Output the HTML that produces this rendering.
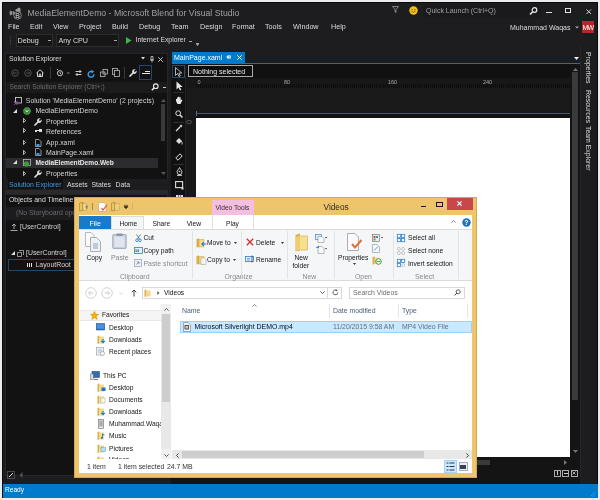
<!DOCTYPE html>
<html><head><meta charset="utf-8">
<style>
*{margin:0;padding:0;box-sizing:border-box}
html,body{width:600px;height:500px;overflow:hidden;background:#ececef}
body{position:relative;font-family:"Liberation Sans",sans-serif;font-size:7px;color:#d0d0d0}
.a{position:absolute}
.t{position:absolute;white-space:nowrap;line-height:1}
svg{position:absolute;overflow:visible}
.m{font-size:7.2px;color:#dcdcdc;top:22.8px}
.st{color:#d4d4d4;font-size:6.9px}
.ex{color:#141414;font-size:6.65px}
</style></head><body><div id="root" style="position:absolute;left:0;top:0;width:600px;height:500px;will-change:transform">
<!-- VS window -->
<div class="a" style="left:2px;top:2px;width:596px;height:496px;background:#1d1d1f;border:1px solid #0a0a0a"></div>

<!-- title bar -->
<svg style="left:8.5px;top:7px" width="14" height="13" viewBox="0 0 14 13"><path d="M1 3.5 Q0 6 1 8.5 L3.5 7.5 L3.5 4.5 Z" fill="#8c8c8c"/><path d="M4 4 L7 6 L4 8Z" fill="#8c8c8c"/><path d="M6 3 L10 0.5 L11.5 1.5 L11.5 5 L8 5 Z" fill="#9a9a9a"/><circle cx="8.6" cy="8.4" r="3.8" fill="#1d1d1f" stroke="#8c8c8c" stroke-width="0.9"/><text x="8.6" y="11" font-size="6.5" font-family="Liberation Sans" font-weight="bold" text-anchor="middle" fill="#a8a8a8">B</text></svg>
<div class="t" style="left:27.5px;top:9.3px;font-size:8.7px;color:#a0a0a0">MediaElementDemo - Microsoft Blend for Visual Studio</div>
<svg style="left:391.5px;top:6px" width="7" height="7" viewBox="0 0 7 7"><path d="M0.5 0.5 L6.5 0.5 L4 3.5 L4 6.5 L3 6 L3 3.5 Z" fill="none" stroke="#9a9a9a" stroke-width="0.8"/></svg>
<svg style="left:408.5px;top:5.7px" width="9" height="9" viewBox="0 0 9 9"><circle cx="4.5" cy="4.5" r="4.2" fill="#f4c21d"/><circle cx="3.1" cy="3.6" r="0.6" fill="#5a4500"/><circle cx="5.9" cy="3.6" r="0.6" fill="#5a4500"/><path d="M2.4 5.2 Q4.5 7.5 6.6 5.2" fill="none" stroke="#5a4500" stroke-width="0.7"/></svg>
<div class="a" style="left:423px;top:4px;width:118px;height:14px;background:#1a1a1c"></div>
<div class="t" style="left:426px;top:6.8px;font-size:7px;color:#a0a0a0">Quick Launch (Ctrl+Q)</div>
<svg style="left:529px;top:7px" width="9" height="8" viewBox="0 0 9 8"><circle cx="5.5" cy="3" r="2.3" fill="none" stroke="#e8e8e8" stroke-width="1.2"/><path d="M4 4.5 L1 7.5" stroke="#e8e8e8" stroke-width="1.6"/></svg>
<div class="a" style="left:546px;top:11.8px;width:6px;height:1.3px;background:#e0e0e0"></div>
<div class="a" style="left:565.3px;top:8.3px;width:6.2px;height:5px;border:1px solid #e0e0e0;border-top-width:1.8px"></div>
<svg style="left:585.8px;top:8.8px" width="5.5" height="5.5" viewBox="0 0 6 6"><path d="M0.5 0.5 L5.5 5.5 M5.5 0.5 L0.5 5.5" stroke="#e0e0e0" stroke-width="1"/></svg>

<!-- menu -->
<div class="t m" style="left:8px">File</div>
<div class="t m" style="left:30px">Edit</div>
<div class="t m" style="left:53px">View</div>
<div class="t m" style="left:79px">Project</div>
<div class="t m" style="left:112px">Build</div>
<div class="t m" style="left:139px">Debug</div>
<div class="t m" style="left:171px">Team</div>
<div class="t m" style="left:200px">Design</div>
<div class="t m" style="left:232px">Format</div>
<div class="t m" style="left:265px">Tools</div>
<div class="t m" style="left:293px">Window</div>
<div class="t m" style="left:331px">Help</div>
<div class="t" style="left:510px;top:23.5px;font-size:7px;color:#dcdcdc">Muhammad Waqas</div>
<svg style="left:575px;top:26px" width="4" height="3" viewBox="0 0 4 3"><path d="M0 0.5 L4 0.5 L2 2.5Z" fill="#aaa"/></svg>
<div class="a" style="left:582px;top:21px;width:12px;height:12px;background:#b5262b"></div>
<div class="t" style="left:582.5px;top:23.5px;font-size:7px;color:#fff;letter-spacing:-0.8px">MW</div>

<!-- toolbar -->
<div class="a" style="left:10px;top:36px;width:2px;height:9px;border-left:1px dotted #444"></div>
<div class="a" style="left:15.5px;top:34px;width:37px;height:12.5px;background:#161617;border:1px solid #2c2c2e"></div>
<div class="t" style="left:17.5px;top:36.5px;font-size:7.2px;color:#dcdcdc">Debug</div>
<div class="a" style="left:48px;top:40px;width:2.5px;height:1px;background:#aaa"></div>
<div class="a" style="left:56px;top:34px;width:63px;height:12.5px;background:#161617;border:1px solid #2c2c2e"></div>
<div class="t" style="left:58.5px;top:36.5px;font-size:7.2px;color:#dcdcdc">Any CPU</div>
<div class="a" style="left:114px;top:40px;width:2.5px;height:1px;background:#aaa"></div>
<svg style="left:126px;top:36.5px" width="6" height="7" viewBox="0 0 6 7"><path d="M0 0 L5.5 3.5 L0 7Z" fill="#3fb24f"/></svg>
<div class="t" style="left:135.5px;top:36.5px;font-size:6.8px;color:#dcdcdc">Internet Explorer</div>
<div class="a" style="left:189px;top:40.5px;width:3px;height:1px;background:#aaa"></div>
<div class="a" style="left:196px;top:43px;width:3px;height:1px;background:#aaa"></div>
<svg style="left:196px;top:44px" width="3" height="2" viewBox="0 0 3 2"><path d="M0 0 L3 0 L1.5 2Z" fill="#aaa"/></svg>

<!-- Solution Explorer panel -->
<div class="a" style="left:5px;top:52.5px;width:163px;height:139px;background:#121213;border:1px solid #262628"></div>
<div class="t" style="left:9px;top:55.5px;font-size:6.9px;color:#dedede">Solution Explorer</div>
<svg style="left:141px;top:57px" width="4" height="3" viewBox="0 0 4 3"><path d="M0 0 L4 0 L2 2.5Z" fill="#ddd"/></svg>
<svg style="left:149.5px;top:55.5px" width="4" height="7" viewBox="0 0 4 7"><path d="M1 0.5 L3 0.5 L3 4 L1 4 Z M0 4 L4 4 M2 4 L2 6.5" fill="none" stroke="#ccc" stroke-width="0.8"/></svg>
<svg style="left:158px;top:56.5px" width="5" height="5" viewBox="0 0 5 5"><path d="M0.3 0.3 L4.7 4.7 M4.7 0.3 L0.3 4.7" stroke="#ddd" stroke-width="0.9"/></svg>
<!-- se toolbar -->
<svg style="left:11px;top:69px" width="8" height="8" viewBox="0 0 8 8"><circle cx="4" cy="4" r="3.3" fill="none" stroke="#555" stroke-width="0.9"/><path d="M5.8 4 L2.3 4 M3.8 2.5 L2.3 4 L3.8 5.5" fill="none" stroke="#555" stroke-width="0.8"/></svg>
<svg style="left:23.5px;top:69px" width="8" height="8" viewBox="0 0 8 8"><circle cx="4" cy="4" r="3.3" fill="none" stroke="#555" stroke-width="0.9"/><path d="M2.2 4 L5.7 4 M4.2 2.5 L5.7 4 L4.2 5.5" fill="none" stroke="#555" stroke-width="0.8"/></svg>
<svg style="left:36px;top:68.5px" width="8" height="8" viewBox="0 0 8 8"><path d="M0.5 4 L4 0.8 L7.5 4 M1.5 3.3 L1.5 7.5 L6.5 7.5 L6.5 3.3 M3.3 7.5 L3.3 5.2 L4.7 5.2 L4.7 7.5" fill="none" stroke="#e6e6e6" stroke-width="0.9"/></svg>
<div class="a" style="left:49.5px;top:67px;width:1px;height:12px;background:#3a3a3a"></div>
<svg style="left:54.5px;top:67.5px" width="16" height="9" viewBox="0 0 16 9"><circle cx="5" cy="5.2" r="2.6" fill="none" stroke="#ddd" stroke-width="0.9"/><path d="M5 3.8 L5 5.3 L6 5.8 M2 1 L3 2.2" fill="none" stroke="#ddd" stroke-width="0.8"/><path d="M12 4.6 L14.5 4.6 L14.5 5.4 L12 5.4Z" fill="#aaa"/></svg>
<svg style="left:74.5px;top:68.5px" width="7" height="8" viewBox="0 0 7 8"><path d="M0.5 2.5 L6 2.5 M4.5 1 L6 2.5 L4.5 4 M6.5 5.5 L1 5.5 M2.5 4 L1 5.5 L2.5 7" fill="none" stroke="#ddd" stroke-width="0.9"/></svg>
<svg style="left:86.5px;top:69.5px" width="8.5" height="8.5" viewBox="0 0 8 8"><path d="M6.5 4 A2.7 2.7 0 1 1 5 1.6" fill="none" stroke="#3d9be9" stroke-width="1.4"/><path d="M3.8 0 L6.8 1.2 L4.5 3.5Z" fill="#3d9be9"/></svg>
<svg style="left:99.5px;top:68.5px" width="8" height="8" viewBox="0 0 8 8"><rect x="0.5" y="3" width="4.5" height="4.5" fill="none" stroke="#bbb" stroke-width="0.8"/><rect x="3" y="0.5" width="4.5" height="4.5" fill="none" stroke="#bbb" stroke-width="0.8"/></svg>
<svg style="left:111.5px;top:68px" width="8" height="9" viewBox="0 0 8 9"><rect x="0.5" y="0.5" width="5" height="6" fill="none" stroke="#bbb" stroke-width="0.8"/><rect x="2.5" y="2.5" width="5" height="6" fill="#121213" stroke="#bbb" stroke-width="0.8"/></svg>
<div class="a" style="left:124px;top:67px;width:1px;height:12px;background:#3a3a3a"></div>
<svg style="left:129px;top:69px" width="8" height="8" viewBox="0 0 8 8"><path d="M1 7 L4.5 3.5" stroke="#e0e0e0" stroke-width="1.7" stroke-linecap="round"/><circle cx="5.4" cy="2.6" r="2.3" fill="#e0e0e0"/><path d="M5.4 2.6 L8 0" stroke="#121213" stroke-width="1.5"/></svg>
<div class="a" style="left:138.6px;top:64.8px;width:13.6px;height:15.6px;border:1px solid #27476a;background:#121213"></div>
<div class="a" style="left:141.6px;top:72.6px;width:8px;height:1.4px;background:#e6e6e6"></div>
<div class="a" style="left:144.5px;top:71px;width:5px;height:1px;background:#e6e6e6"></div>
<!-- search -->
<div class="a" style="left:6px;top:81.5px;width:161px;height:11px;background:#1b1b1c"></div>
<div class="t" style="left:9.5px;top:84px;font-size:6.6px;color:#6e6e6e">Search Solution Explorer (Ctrl+;)</div>
<svg style="left:151px;top:83px" width="8" height="8" viewBox="0 0 8 8"><circle cx="4.8" cy="3.2" r="2.3" fill="none" stroke="#e8e8e8" stroke-width="1.1"/><path d="M3.3 4.7 L0.8 7.2" stroke="#e8e8e8" stroke-width="1.5"/></svg>
<div class="a" style="left:162.5px;top:87px;width:3px;height:1px;background:#ccc"></div>

<!-- tree -->
<svg style="left:14px;top:96.5px" width="8" height="8" viewBox="0 0 8 8"><rect x="1.5" y="0.5" width="6" height="5.5" fill="none" stroke="#ddd" stroke-width="0.8"/><path d="M0 4.5 L3.5 7.5 M0 7.5 L3.5 4.5" stroke="#9b4fc9" stroke-width="1.1"/></svg>
<div class="t st" style="left:25.8px;top:98.3px">Solution 'MediaElementDemo' (2 projects)</div>
<svg style="left:13px;top:108.5px" width="4" height="4" viewBox="0 0 4 4"><path d="M4 0 L4 4 L0 4Z" fill="#e0e0e0"/></svg>
<svg style="left:22.5px;top:106.5px" width="8" height="8" viewBox="0 0 8 8"><circle cx="4" cy="4" r="3.5" fill="#3d8a3d" stroke="#8fd18f" stroke-width="0.6" stroke-dasharray="1 0.7"/><path d="M2.5 3 L4 5 L5.5 3" fill="none" stroke="#cfe" stroke-width="0.8"/></svg>
<div class="t st" style="left:35.5px;top:108.3px">MediaElementDemo</div>
<svg style="left:23px;top:118px" width="3" height="5" viewBox="0 0 3 5"><path d="M0.5 0.4 L2.7 2.5 L0.5 4.6Z" fill="none" stroke="#e0e0e0" stroke-width="0.8"/></svg>
<svg style="left:34px;top:117.5px" width="8" height="8" viewBox="0 0 8 8"><path d="M1 7 L4.5 3.5" stroke="#e0e0e0" stroke-width="1.7" stroke-linecap="round"/><circle cx="5.4" cy="2.6" r="2.3" fill="#e0e0e0"/><path d="M5.4 2.6 L8 0" stroke="#121213" stroke-width="1.5"/></svg>
<div class="t st" style="left:46px;top:118.8px">Properties</div>
<svg style="left:23px;top:128px" width="3" height="5" viewBox="0 0 3 5"><path d="M0.5 0.4 L2.7 2.5 L0.5 4.6Z" fill="none" stroke="#e0e0e0" stroke-width="0.8"/></svg>
<div class="a" style="left:34.5px;top:129.5px;width:2px;height:2px;background:#ddd"></div>
<div class="a" style="left:37px;top:130.3px;width:2px;height:0.8px;background:#ddd"></div>
<div class="a" style="left:39px;top:129px;width:3px;height:3px;background:#ddd"></div>
<div class="t st" style="left:46px;top:128.6px">References</div>
<svg style="left:23px;top:140px" width="3" height="5" viewBox="0 0 3 5"><path d="M0.5 0.4 L2.7 2.5 L0.5 4.6Z" fill="none" stroke="#e0e0e0" stroke-width="0.8"/></svg>
<svg style="left:35px;top:138.5px" width="7" height="8" viewBox="0 0 7 8"><path d="M0.5 0.5 L4 0.5 L6 2.5 L6 7.5 L0.5 7.5Z" fill="none" stroke="#ccc" stroke-width="0.7"/><rect x="1.5" y="5" width="3" height="2.5" fill="#3d9be9"/></svg>
<div class="t st" style="left:46px;top:140.1px">App.xaml</div>
<svg style="left:23px;top:149.5px" width="3" height="5" viewBox="0 0 3 5"><path d="M0.5 0.4 L2.7 2.5 L0.5 4.6Z" fill="none" stroke="#e0e0e0" stroke-width="0.8"/></svg>
<svg style="left:35px;top:148px" width="7" height="8" viewBox="0 0 7 8"><path d="M0.5 0.5 L4 0.5 L6 2.5 L6 7.5 L0.5 7.5Z" fill="none" stroke="#ccc" stroke-width="0.7"/><rect x="1.5" y="5" width="3" height="2.5" fill="#3d9be9"/></svg>
<div class="t st" style="left:46px;top:149.8px">MainPage.xaml</div>
<div class="a" style="left:6px;top:158px;width:151.5px;height:9.5px;background:#2c2c2e"></div>
<svg style="left:13px;top:160px" width="4" height="4" viewBox="0 0 4 4"><path d="M4 0 L4 4 L0 4Z" fill="#e0e0e0"/></svg>
<svg style="left:23px;top:158.5px" width="8" height="8" viewBox="0 0 8 8"><rect x="0.5" y="0.5" width="7" height="6" fill="none" stroke="#ccc" stroke-width="0.7"/><circle cx="3.5" cy="5" r="2.7" fill="#3d9a3d"/></svg>
<div class="t st" style="left:35.5px;top:160px;font-weight:bold;font-size:6.6px;color:#e8e8e8">MediaElementDemo.Web</div>
<svg style="left:23px;top:170.5px" width="3" height="5" viewBox="0 0 3 5"><path d="M0.5 0.4 L2.7 2.5 L0.5 4.6Z" fill="none" stroke="#e0e0e0" stroke-width="0.8"/></svg>
<svg style="left:34px;top:169.5px" width="8" height="8" viewBox="0 0 8 8"><path d="M1 7 L4.5 3.5" stroke="#e0e0e0" stroke-width="1.7" stroke-linecap="round"/><circle cx="5.4" cy="2.6" r="2.3" fill="#e0e0e0"/><path d="M5.4 2.6 L8 0" stroke="#121213" stroke-width="1.5"/></svg>
<div class="t st" style="left:46px;top:171.1px">Properties</div>
<!-- se scrollbar -->
<div class="a" style="left:159.5px;top:95px;width:7px;height:82px;background:#121213"></div>
<svg style="left:160.5px;top:98.5px" width="5" height="3" viewBox="0 0 5 3"><path d="M0 3 L2.5 0 L5 3Z" fill="#555"/></svg>
<div class="a" style="left:161px;top:104px;width:4px;height:37px;background:#3a3a3c"></div>
<svg style="left:160.5px;top:171.5px" width="5" height="3" viewBox="0 0 5 3"><path d="M0 0 L2.5 3 L5 0Z" fill="#555"/></svg>
<!-- se tabs -->
<div class="a" style="left:5px;top:178.5px;width:163px;height:11.5px;background:#1d1d1f"></div>
<div class="a" style="left:7.5px;top:179px;width:55px;height:10px;background:#121213"></div>
<div class="t" style="left:9px;top:182.3px;font-size:6.9px;color:#3d9be9">Solution Explorer</div>
<div class="t" style="left:67px;top:182.3px;font-size:6.9px;color:#dcdcdc">Assets</div>
<div class="t" style="left:91.5px;top:182.3px;font-size:6.9px;color:#dcdcdc">States</div>
<div class="t" style="left:115.5px;top:182.3px;font-size:6.9px;color:#dcdcdc">Data</div>

<div class="a" style="left:5px;top:190px;width:163px;height:3.8px;background:#2a2a2d"></div>
<!-- Objects and Timeline -->
<div class="a" style="left:5px;top:194px;width:163px;height:282px;background:#121213;border:1px solid #262628"></div>
<div class="t" style="left:9px;top:196.5px;font-size:6.9px;color:#dedede">Objects and Timeline</div>
<div class="a" style="left:6px;top:207px;width:161px;height:13px;background:#1c1c1e"></div>
<div class="t" style="left:16px;top:210px;font-size:6.9px;color:#6a6a6a">(No Storyboard open)</div>
<svg style="left:9.5px;top:222.8px" width="8" height="8" viewBox="0 0 8 8"><path d="M4 6 L4 1 M2 3 L4 1 L6 3 M0.5 7.5 L7.5 7.5" fill="none" stroke="#ccc" stroke-width="0.8"/></svg>
<div class="t st" style="left:20px;top:223.8px">[UserControl]</div>
<svg style="left:10.5px;top:251px" width="4" height="4" viewBox="0 0 4 4"><path d="M4 0 L4 4 L0 4Z" fill="#e0e0e0"/></svg>
<svg style="left:17px;top:249.5px" width="7" height="7" viewBox="0 0 7 7"><path d="M2 0.5 L6.5 0.5 L6.5 5 M0.5 2.5 L4.5 2.5 L4.5 6.5 L0.5 6.5Z" fill="none" stroke="#ccc" stroke-width="0.7"/></svg>
<div class="t st" style="left:26px;top:250.3px">[UserControl]</div>
<div class="a" style="left:8px;top:259px;width:160px;height:11.5px;border:1px solid #24476b;background:#121213"></div>
<div class="a" style="left:26.5px;top:262.5px;width:1px;height:4.5px;background:#ddd;box-shadow:2px 0 #ddd,4px 0 #ddd"></div>
<div class="t st" style="left:35.5px;top:262px">LayoutRoot</div>

<!-- left bottom icons -->
<svg style="left:7px;top:471px" width="8" height="8" viewBox="0 0 8 8"><rect x="0.5" y="0.5" width="7" height="7" fill="none" stroke="#aaa" stroke-width="0.7" stroke-dasharray="1 1"/><path d="M2 6 L6 2" stroke="#ddd" stroke-width="1"/></svg>
<svg style="left:18.5px;top:472px" width="4" height="6" viewBox="0 0 4 6"><path d="M3.5 0 L0.5 3 L3.5 6Z" fill="#555"/></svg>

<!-- Designer tab -->
<div class="a" style="left:171.5px;top:51.5px;width:73.5px;height:11.5px;background:#007acc"></div>
<div class="t" style="left:174px;top:54px;font-size:7px;color:#fff">MainPage.xaml</div>
<svg style="left:226px;top:55px" width="5" height="4" viewBox="0 0 5 4"><path d="M0.3 2 L4.7 2 M1.5 0.5 L1.5 3.5" stroke="#fff" stroke-width="0.8"/><rect x="2.3" y="0.8" width="2.2" height="2.4" fill="none" stroke="#fff" stroke-width="0.7"/></svg>
<svg style="left:236.5px;top:54.5px" width="5" height="5" viewBox="0 0 5 5"><path d="M0.3 0.3 L4.7 4.7 M4.7 0.3 L0.3 4.7" stroke="#fff" stroke-width="1"/></svg>
<div class="a" style="left:171.5px;top:62.5px;width:408.5px;height:1.2px;background:#007acc"></div>
<svg style="left:574px;top:56.5px" width="5" height="3" viewBox="0 0 5 3"><path d="M0 0 L5 0 L2.5 3Z" fill="#eee"/></svg>
<!-- designer background -->
<div class="a" style="left:171px;top:64px;width:409px;height:420px;background:#141415"></div>
<!-- toolbox -->
<div class="a" style="left:171px;top:64px;width:15px;height:413px;background:#111112;border-right:1px solid #232325"></div>
<div class="a" style="left:172px;top:65px;width:13px;height:12.5px;border:1px solid #244a70"></div>
<svg style="left:175px;top:66.5px" width="8" height="10" viewBox="0 0 8 10"><path d="M0.5 0.5 L0.5 8.5 L2.5 6.5 L4 9.5 L5.3 8.8 L3.8 6 L6.8 6Z" fill="none" stroke="#ddd" stroke-width="0.8"/></svg>
<svg style="left:175.5px;top:80.5px" width="8" height="10" viewBox="0 0 8 10"><path d="M0.5 0.5 L0.5 8.5 L2.5 6.5 L4 9.5 L5.3 8.8 L3.8 6 L6.8 6Z" fill="#e6e6e6"/></svg>
<div class="a" style="left:173px;top:92px;width:11px;height:0.8px;background:#2e2e30"></div>
<svg style="left:174.5px;top:95.5px" width="9" height="9" viewBox="0 0 9 9"><path d="M1 5 L1 3 L2 3 L2 4.5 L2 1.5 L3 1.5 L3 4 L3 0.8 L4.3 0.8 L4.3 4 L4.5 1.3 L5.7 1.3 L5.7 4.5 L6.5 3.5 L7.5 4 L5.5 8 L2.5 8 Z" fill="#e6e6e6"/></svg>
<svg style="left:175px;top:109.5px" width="8" height="8" viewBox="0 0 8 8"><circle cx="3.2" cy="3.2" r="2.4" fill="none" stroke="#ddd" stroke-width="1"/><path d="M5 5 L7.5 7.5" stroke="#ddd" stroke-width="1.5"/></svg>
<div class="a" style="left:173px;top:121.5px;width:11px;height:0.8px;background:#2e2e30"></div>
<svg style="left:175px;top:123.5px" width="8" height="8" viewBox="0 0 8 8"><path d="M1 7 L5 3" stroke="#ddd" stroke-width="1.2"/><path d="M4.5 2 L6 0.5 L7.5 2 L6 3.5Z" fill="#ddd"/></svg>
<svg style="left:175px;top:137px" width="8" height="8" viewBox="0 0 8 8"><path d="M1 4 L4 1 L7 4 L4 7Z" fill="#ddd"/><path d="M6 4 Q8 6 7 7.5" stroke="#ddd" stroke-width="0.9" fill="none"/></svg>
<svg style="left:175px;top:152.5px" width="8" height="8" viewBox="0 0 8 8"><path d="M0.8 5 L5 0.8 L7.2 3 L3 7.2Z" fill="none" stroke="#ddd" stroke-width="1"/></svg>
<div class="a" style="left:173px;top:163.5px;width:11px;height:0.8px;background:#2e2e30"></div>
<svg style="left:176px;top:166.5px" width="7" height="9" viewBox="0 0 7 9"><path d="M3.5 0.5 L6 4.5 L5 7.5 L2 7.5 L1 4.5Z" fill="none" stroke="#ddd" stroke-width="0.9"/><circle cx="3.5" cy="4.5" r="0.8" fill="#ddd"/><path d="M1 8.5 L6 8.5" stroke="#ddd" stroke-width="0.8"/></svg>
<svg style="left:175px;top:181px" width="9" height="9" viewBox="0 0 9 9"><rect x="0.6" y="0.6" width="7" height="6" fill="none" stroke="#ddd" stroke-width="1.1"/><rect x="6.5" y="6.5" width="2" height="2" fill="#ddd"/></svg>
<div class="a" style="left:176px;top:195px;width:1.5px;height:1.5px;background:#ddd;box-shadow:2.5px 0 #ddd,5px 0 #ddd"></div>
<!-- ruler -->
<div class="a" style="left:187px;top:64px;width:383px;height:14px;background:#111112"></div><div class="a" style="left:187px;top:78px;width:383px;height:10px;background:#171718"></div><div class="a" style="left:187px;top:88px;width:383px;height:25.5px;background:#1a1a1b"></div><div class="a" style="left:187px;top:114px;width:383px;height:4px;background:#121213"></div>
<div class="a" style="left:196px;top:84px;width:374px;height:4px;background:repeating-linear-gradient(90deg,#0e0e0f 0 1px,transparent 1px 2.05px)"></div>
<div class="t" style="left:197.5px;top:79.5px;font-size:5.5px;color:#aaa">0</div>
<div class="t" style="left:284px;top:79.5px;font-size:5.5px;color:#aaa">80</div>
<div class="t" style="left:388px;top:79.5px;font-size:5.5px;color:#aaa">160</div>
<div class="t" style="left:483px;top:79.5px;font-size:5.5px;color:#aaa">240</div>
<div class="a" style="left:195.5px;top:113px;width:374px;height:1px;background:#4a5670"></div>
<div class="a" style="left:195.5px;top:111px;width:1px;height:5px;background:#4a6aa0"></div>
<div class="a" style="left:186px;top:114px;width:10px;height:363px;background:#18181a"></div>
<svg style="left:186px;top:120px" width="6" height="4" viewBox="0 0 6 4"><ellipse cx="3" cy="2" rx="2.5" ry="1.6" fill="none" stroke="#666" stroke-width="0.7"/></svg>
<!-- nothing selected -->
<div class="a" style="left:187.5px;top:65px;width:65.5px;height:12px;border:1px solid #aaa;background:#0e0e0f"></div>
<div class="t" style="left:193px;top:67.5px;font-size:7px;color:#e8e8e8">Nothing selected</div>
<!-- artboard -->
<div class="a" style="left:196px;top:118px;width:373.5px;height:338.5px;background:#ffffff"></div>
<!-- designer scrollbars -->
<div class="a" style="left:570px;top:64px;width:10px;height:413px;background:#141415"></div>
<svg style="left:572.5px;top:67.5px" width="5" height="3" viewBox="0 0 5 3"><path d="M0 3 L2.5 0 L5 3Z" fill="#777"/></svg>
<div class="a" style="left:572px;top:72px;width:5.5px;height:328px;background:#3a3a3c"></div>
<svg style="left:572.5px;top:449.5px" width="5" height="3" viewBox="0 0 5 3"><path d="M0 0 L2.5 3 L5 0Z" fill="#777"/></svg>
<div class="a" style="left:196px;top:458px;width:374px;height:8px;background:#141415"></div>
<div class="a" style="left:470px;top:459.5px;width:20px;height:5px;background:#3a3a3c"></div>
<svg style="left:563.5px;top:459.5px" width="3" height="5" viewBox="0 0 3 5"><path d="M0 0 L3 2.5 L0 5Z" fill="#777"/></svg>
<!-- bottom icons -->
<div class="a" style="left:553.5px;top:469.5px;width:7px;height:7px;border:1px solid #aaa"></div>
<div class="a" style="left:556.5px;top:471px;width:1px;height:4px;background:#ccc"></div>
<div class="a" style="left:562px;top:469.5px;width:7px;height:7px;border:1px solid #aaa"></div>
<div class="a" style="left:563.5px;top:472.5px;width:4px;height:1px;background:#ccc"></div>
<div class="a" style="left:570.5px;top:469.5px;width:7px;height:7px;border:1px solid #aaa"></div>
<svg style="left:572px;top:471px" width="4" height="4" viewBox="0 0 4 4"><path d="M0.5 0.5 L3.5 3.5 M3.5 0.5 L0.5 3.5" stroke="#ccc" stroke-width="0.8"/></svg>

<!-- right vertical tabs -->
<div class="a" style="left:580px;top:46px;width:1px;height:431px;background:#262628"></div>
<div class="t" style="left:590.7px;top:51.5px;font-size:6.9px;color:#dcdcdc;transform-origin:0 0;transform:rotate(90deg)">Properties</div>
<div class="t" style="left:590.7px;top:89.8px;font-size:6.9px;color:#dcdcdc;transform-origin:0 0;transform:rotate(90deg)">Resources</div>
<div class="t" style="left:590.7px;top:126.4px;font-size:6.9px;color:#dcdcdc;transform-origin:0 0;transform:rotate(90deg)">Team Explorer</div>

<!-- status bar -->
<div class="a" style="left:3px;top:483.5px;width:595px;height:14px;background:#007acc"></div>
<div class="t" style="left:5px;top:487.3px;font-size:6.6px;color:#fff">Ready</div>
<svg style="left:590px;top:491px" width="6" height="6" viewBox="0 0 6 6"><path d="M5.5 0.5 L0.5 5.5 M5.5 3 L3 5.5" stroke="#3d9be9" stroke-width="0.8"/></svg>

<!-- EXPLORER -->
<div class="a" style="left:74px;top:197px;width:403px;height:280.5px;background:#efc56b;border:1px solid #d2aa55"></div>
<!-- title bar icons -->
<svg style="left:79px;top:202px" width="9" height="9" viewBox="0 0 9 9"><path d="M0.5 1 L4 0.3 L4 8.5 L0.5 8.8Z" fill="#d8ad48" stroke="#a07a20" stroke-width="0.5"/><path d="M4 1.5 L7.5 1.5 L7.5 8.2 L4 8.2Z" fill="#f6dc8c" stroke="#b89038" stroke-width="0.5"/><path d="M2 1.5 L2 8" stroke="#fbe9a8" stroke-width="0.8"/><path d="M6.5 3.5 L8.8 3.5 L8.8 6.5 L6.5 6.5Z" fill="#8a8a8a"/></svg>
<div class="a" style="left:92px;top:203px;width:0.8px;height:7px;background:#b08a3a"></div>
<svg style="left:98px;top:202px" width="10" height="10" viewBox="0 0 10 10"><path d="M0.5 0.5 L6 0.5 L8 2.5 L8 9.5 L0.5 9.5Z" fill="#fbfbfb" stroke="#c0a060" stroke-width="0.6"/><path d="M3.5 6 L5 8 L9 3" fill="none" stroke="#e0503a" stroke-width="1.2"/></svg>
<svg style="left:111px;top:202px" width="9" height="9" viewBox="0 0 9 9"><path d="M0.5 1 L4 0.3 L4 8.5 L0.5 8.8Z" fill="#d8ad48" stroke="#a07a20" stroke-width="0.5"/><path d="M4 1.5 L8 1.5 L8 8.2 L4 8.2Z" fill="#f6dc8c" stroke="#b89038" stroke-width="0.5"/><path d="M2 1.5 L2 8" stroke="#fbe9a8" stroke-width="0.8"/><path d="M6 1.5 L6 8" stroke="#e0bb60" stroke-width="0.6"/></svg>
<svg style="left:124px;top:205px" width="4" height="4" viewBox="0 0 4 4"><path d="M0 0.3 L4 0.3 M0 1.5 L4 1.5 L2 3.8Z" stroke="#222" stroke-width="0.6" fill="#222"/></svg>
<div class="a" style="left:131.5px;top:203px;width:0.8px;height:7px;background:#d9b45a"></div>
<div class="t" style="left:323.5px;top:202.5px;font-size:8.3px;color:#2a2a2a">Videos</div>
<div class="a" style="left:421px;top:205.5px;width:5px;height:1.6px;background:#1a1a1a"></div>
<div class="a" style="left:436px;top:202px;width:6.5px;height:4.8px;border:1px solid #1a1a1a;border-top-width:1.8px"></div>
<div class="a" style="left:447px;top:197.5px;width:25.5px;height:12px;background:#c7474a"></div>
<svg style="left:457px;top:201px" width="5" height="5" viewBox="0 0 5 5"><path d="M0.4 0.4 L4.6 4.6 M4.6 0.4 L0.4 4.6" stroke="#fff" stroke-width="1.1"/></svg>
<!-- contextual tab header -->
<div class="a" style="left:211.5px;top:200px;width:42px;height:15px;background:#f4bee0"></div>
<div class="t" style="left:215.5px;top:204.5px;font-size:6.6px;color:#333">Video Tools</div>
<!-- client -->
<div class="a" style="left:79px;top:215px;width:392.5px;height:257.5px;background:#ffffff"></div>
<!-- tabs -->
<div class="a" style="left:79px;top:215.5px;width:32px;height:13.5px;background:#1979ca"></div>
<div class="t" style="left:89.5px;top:219.5px;font-size:7px;color:#fff">File</div>
<div class="a" style="left:111px;top:215.5px;width:33px;height:14px;background:#f5f6f7;border:1px solid #dadbdc;border-bottom:none"></div>
<div class="t ex" style="left:119.5px;top:220.6px">Home</div>
<div class="t ex" style="left:152.5px;top:220.6px">Share</div>
<div class="t ex" style="left:186.7px;top:220.6px">View</div>
<div class="a" style="left:211.5px;top:215px;width:0.8px;height:14px;background:#e0e0e0"></div>
<div class="a" style="left:253px;top:215px;width:0.8px;height:14px;background:#e0e0e0"></div>
<div class="t ex" style="left:226px;top:220.6px">Play</div>
<svg style="left:451px;top:219.8px" width="5" height="3" viewBox="0 0 5 3"><path d="M0.4 2.6 L2.5 0.5 L4.6 2.6" fill="none" stroke="#777" stroke-width="0.9"/></svg>
<svg style="left:461.5px;top:217.5px" width="9" height="9" viewBox="0 0 9 9"><circle cx="4.5" cy="4.5" r="4.2" fill="#1c6fc2"/><text x="4.5" y="7.3" font-size="7" font-weight="bold" text-anchor="middle" font-family="Liberation Sans" fill="#fff">?</text></svg>
<!-- ribbon body -->
<div class="a" style="left:79px;top:229px;width:392.5px;height:52px;background:#f5f6f7;border-top:1px solid #dadbdc;border-bottom:1px solid #dadbdc"></div>
<!-- clipboard -->
<svg style="left:85px;top:232px" width="17" height="20" viewBox="0 0 17 20"><path d="M0.5 0.5 L6 0.5 L9 3.5 L9 14.5 L0.5 14.5Z" fill="#fafafa" stroke="#9aa0a8" stroke-width="0.7"/><path d="M5.5 5.5 L11.5 5.5 L15.5 9.5 L15.5 19.5 L5.5 19.5Z" fill="#eef2f6" stroke="#8a9098" stroke-width="0.7"/><rect x="8" y="11" width="5" height="6" fill="#b9cbdb"/></svg>
<div class="t ex" style="left:86.5px;top:255px">Copy</div>
<svg style="left:111.5px;top:232.5px" width="15" height="16" viewBox="0 0 15 16"><rect x="0.7" y="1.5" width="13.5" height="14" rx="1" fill="#c7cdd8" stroke="#8e98aa" stroke-width="0.7"/><rect x="2.3" y="3.5" width="10.3" height="10.5" fill="#dfe5ee"/><rect x="4.5" y="0.5" width="6" height="2.5" fill="#8e98aa"/></svg>
<div class="t" style="left:111px;top:255px;font-size:6.9px;color:#888">Paste</div>
<svg style="left:134.5px;top:234px" width="7" height="8" viewBox="0 0 7 8"><path d="M1.5 0.5 L4.5 5 M5.5 0.5 L2.5 5" stroke="#55606c" stroke-width="0.8"/><circle cx="2" cy="6.3" r="1.3" fill="none" stroke="#2a86d6" stroke-width="0.9"/><circle cx="5" cy="6.3" r="1.3" fill="none" stroke="#2a86d6" stroke-width="0.9"/></svg>
<div class="t ex" style="left:143.5px;top:235px">Cut</div>
<svg style="left:133.5px;top:247px" width="9" height="7" viewBox="0 0 9 7"><rect x="0.5" y="0.5" width="8" height="6" fill="#e7eff8" stroke="#3a7cc6" stroke-width="0.8"/><path d="M2 2 L2 5 L3.2 3.5 L4.4 5 L4.4 2" fill="none" stroke="#2a5ea0" stroke-width="0.7"/></svg>
<div class="t ex" style="left:143.5px;top:248px">Copy path</div>
<svg style="left:134px;top:259px" width="8" height="8" viewBox="0 0 8 8"><rect x="0.5" y="0.5" width="7" height="7" fill="#eef0f4" stroke="#98a0b0" stroke-width="0.7"/><path d="M2.5 5.5 L5 3 M3 3 L5 3 L5 5" fill="none" stroke="#4a7cc0" stroke-width="0.7"/></svg>
<div class="t" style="left:143.5px;top:260.5px;font-size:6.9px;color:#8a8a8a">Paste shortcut</div>
<div class="t" style="left:120px;top:273.5px;font-size:6.9px;color:#8a8a8a">Clipboard</div>
<div class="a" style="left:191.5px;top:231px;width:0.8px;height:48px;background:#e2e3e4"></div>
<!-- organize -->
<svg style="left:195.5px;top:237.5px" width="11" height="10" viewBox="0 0 11 10"><path d="M0.5 1 L3 0.5 L3 9 L0.5 9.5Z" fill="#d8b048"/><path d="M3 1.5 L8 1.5 L8 9 L3 9Z" fill="#f6d98a" stroke="#c9a24a" stroke-width="0.5"/><path d="M10.5 6 L6 6 M7.8 4.2 L6 6 L7.8 7.8" fill="none" stroke="#2a7ac8" stroke-width="1.2"/></svg>
<div class="t ex" style="left:207px;top:240px">Move to</div>
<svg style="left:234px;top:241.5px" width="3" height="2" viewBox="0 0 3 2"><path d="M0 0 L3 0 L1.5 2Z" fill="#333"/></svg>
<svg style="left:195.5px;top:254.5px" width="11" height="10" viewBox="0 0 11 10"><path d="M0.5 1 L3 0.5 L3 9 L0.5 9.5Z" fill="#d8b048"/><path d="M3 1.5 L8 1.5 L8 9 L3 9Z" fill="#f6d98a" stroke="#c9a24a" stroke-width="0.5"/><path d="M5 3 L8.5 3 L10 4.5 L10 9.5 L5 9.5Z" fill="#f4f4f4" stroke="#999" stroke-width="0.5"/></svg>
<div class="t ex" style="left:207px;top:257px">Copy to</div>
<svg style="left:233px;top:258.5px" width="3" height="2" viewBox="0 0 3 2"><path d="M0 0 L3 0 L1.5 2Z" fill="#333"/></svg>
<div class="t" style="left:224.5px;top:273.5px;font-size:6.9px;color:#8a8a8a">Organize</div>
<div class="a" style="left:241px;top:231px;width:0.8px;height:48px;background:#e2e3e4"></div>
<svg style="left:245.5px;top:238px" width="8" height="8" viewBox="0 0 8 8"><path d="M0.8 0.8 L7.2 7.2 M7.2 0.8 L0.8 7.2" stroke="#d0302a" stroke-width="1.3"/></svg>
<div class="t ex" style="left:256px;top:239.8px">Delete</div>
<svg style="left:281px;top:241.5px" width="3" height="2" viewBox="0 0 3 2"><path d="M0 0 L3 0 L1.5 2Z" fill="#333"/></svg>
<svg style="left:245px;top:255px" width="10" height="8" viewBox="0 0 10 8"><rect x="0.5" y="1.5" width="8" height="5" fill="#e2eef9" stroke="#3a7cc6" stroke-width="0.8"/><path d="M2 3.5 L5 3.5 M2 5 L5 5" stroke="#3a7cc6" stroke-width="0.6"/><path d="M7 0.5 L7 7.5" stroke="#333" stroke-width="0.7"/></svg>
<div class="t ex" style="left:256px;top:256.6px">Rename</div>
<div class="a" style="left:286.5px;top:231px;width:0.8px;height:48px;background:#e2e3e4"></div>
<!-- new -->
<svg style="left:294.5px;top:232.5px" width="13" height="19" viewBox="0 0 13 19"><path d="M0.5 2 L5 0.5 L5 17.5 L0.5 18.5Z" fill="#d9b24a"/><path d="M4 3 L12.5 3 L12.5 17 L4 17Z" fill="#f7df92" stroke="#caa650" stroke-width="0.6"/><path d="M1 4 L5 2.5 L5 17 L1 18Z" fill="#f0cd6c"/></svg>
<div class="t ex" style="left:294.5px;top:254.8px">New</div>
<div class="t ex" style="left:292.5px;top:262.8px">folder</div>
<svg style="left:314.5px;top:233.5px" width="12" height="9" viewBox="0 0 12 9"><rect x="0.5" y="0.5" width="6" height="5" fill="#dfeaf5" stroke="#4a86c8" stroke-width="0.7"/><path d="M3 2.5 L7 2.5 L9 4.5 L9 8.5 L3 8.5Z" fill="#fafafa" stroke="#8090a0" stroke-width="0.6"/><path d="M10 3 L12 3 L11 4.5Z" fill="#333"/></svg>
<svg style="left:314.5px;top:245px" width="12" height="9" viewBox="0 0 12 9"><path d="M3 1.5 L7 1.5 L9 3.5 L9 8.5 L3 8.5Z" fill="#fafafa" stroke="#8090a0" stroke-width="0.6"/><path d="M0.5 3 L4 0.5 L4 3Z" fill="#3a86d0"/><path d="M10 3 L12 3 L11 4.5Z" fill="#333"/></svg>
<div class="t" style="left:302.5px;top:273.5px;font-size:6.9px;color:#8a8a8a">New</div>
<div class="a" style="left:334px;top:231px;width:0.8px;height:48px;background:#e2e3e4"></div>
<!-- open -->
<svg style="left:346.5px;top:233px" width="16" height="18" viewBox="0 0 16 18"><path d="M0.5 0.5 L8 0.5 L11.5 4 L11.5 17.5 L0.5 17.5Z" fill="#fbfbfb" stroke="#8a8f96" stroke-width="0.7"/><path d="M5 11 L8 14.5 L14.5 7" fill="none" stroke="#e0703a" stroke-width="2"/></svg>
<div class="t ex" style="left:338px;top:255px">Properties</div>
<svg style="left:352.5px;top:263px" width="3" height="2" viewBox="0 0 3 2"><path d="M0 0 L3 0 L1.5 2Z" fill="#333"/></svg>
<svg style="left:371.5px;top:233.5px" width="11" height="8" viewBox="0 0 11 8"><rect x="0.5" y="0.5" width="7" height="7" fill="#eee" stroke="#666" stroke-width="0.6"/><rect x="1.5" y="2" width="2" height="2" fill="#c44"/><rect x="4" y="2" width="2" height="2" fill="#48c"/><rect x="1.5" y="4.5" width="2" height="2" fill="#4a4"/><path d="M9 3 L11 3 L10 4.5Z" fill="#333"/></svg>
<svg style="left:372px;top:244px" width="8" height="9" viewBox="0 0 8 9"><path d="M0.5 0.5 L5 0.5 L7.5 3 L7.5 8.5 L0.5 8.5Z" fill="#fafafa" stroke="#8090a0" stroke-width="0.6"/><path d="M2 6.5 L6 2.5" stroke="#4a86d0" stroke-width="0.9"/></svg>
<svg style="left:371.5px;top:255.5px" width="10" height="9" viewBox="0 0 10 9"><path d="M0.5 1 L3 0.5 L3 8 L0.5 8.5Z" fill="#d9b24a"/><path d="M2.5 1.5 L7 1.5 L7 8 L2.5 8Z" fill="#f6d98a"/><circle cx="6.5" cy="5.5" r="2.8" fill="#fff" stroke="#3a9a3a" stroke-width="1"/><path d="M4.5 5.5 L8.5 5.5" stroke="#3a9a3a" stroke-width="0.9"/></svg>
<div class="t" style="left:355px;top:273.5px;font-size:6.9px;color:#8a8a8a">Open</div>
<div class="a" style="left:392.5px;top:231px;width:0.8px;height:48px;background:#e2e3e4"></div>
<!-- select -->
<svg style="left:396.5px;top:233.5px" width="8" height="8" viewBox="0 0 8 8"><rect x="0.3" y="0.3" width="3.2" height="3.2" fill="none" stroke="#2f86d6" stroke-width="0.8"/><rect x="4.5" y="0.3" width="3.2" height="3.2" fill="none" stroke="#2f86d6" stroke-width="0.8"/><rect x="0.3" y="4.5" width="3.2" height="3.2" fill="none" stroke="#2f86d6" stroke-width="0.8"/><rect x="4.5" y="4.5" width="3.2" height="3.2" fill="none" stroke="#2f86d6" stroke-width="0.8"/></svg>
<div class="t ex" style="left:408px;top:234.5px">Select all</div>
<svg style="left:396.5px;top:246.5px" width="8" height="8" viewBox="0 0 8 8"><circle cx="1.9" cy="1.9" r="1.5" fill="none" stroke="#aaa" stroke-width="0.6"/><circle cx="6.1" cy="1.9" r="1.5" fill="none" stroke="#aaa" stroke-width="0.6"/><circle cx="1.9" cy="6.1" r="1.5" fill="none" stroke="#aaa" stroke-width="0.6"/><circle cx="6.1" cy="6.1" r="1.5" fill="none" stroke="#aaa" stroke-width="0.6"/></svg>
<div class="t ex" style="left:408px;top:248.3px">Select none</div>
<svg style="left:396.5px;top:259px" width="8" height="8" viewBox="0 0 8 8"><rect x="0.3" y="0.3" width="3.2" height="3.2" fill="none" stroke="#2f86d6" stroke-width="0.8"/><rect x="4.5" y="0.3" width="3.2" height="3.2" fill="none" stroke="#2f86d6" stroke-width="0.8"/><rect x="0.3" y="4.5" width="3.2" height="3.2" fill="none" stroke="#2f86d6" stroke-width="0.8"/><circle cx="6.1" cy="6.1" r="1.5" fill="none" stroke="#aaa" stroke-width="0.6"/></svg>
<div class="t ex" style="left:408px;top:261px">Invert selection</div>
<div class="t" style="left:415px;top:273.5px;font-size:6.9px;color:#8a8a8a">Select</div>
<div class="a" style="left:458px;top:231px;width:0.8px;height:48px;background:#e2e3e4"></div>

<!-- address row -->
<svg style="left:84.5px;top:286.5px" width="12" height="12" viewBox="0 0 12 12"><circle cx="6" cy="6" r="5.3" fill="none" stroke="#c8c8c8" stroke-width="0.8"/><path d="M8.5 6 L3.5 6 M5.5 4 L3.5 6 L5.5 8" fill="none" stroke="#c0c0c0" stroke-width="0.8"/></svg>
<svg style="left:100.5px;top:286.5px" width="12" height="12" viewBox="0 0 12 12"><circle cx="6" cy="6" r="5.3" fill="none" stroke="#c8c8c8" stroke-width="0.8"/><path d="M3.5 6 L8.5 6 M6.5 4 L8.5 6 L6.5 8" fill="none" stroke="#c0c0c0" stroke-width="0.8"/></svg>
<svg style="left:118.5px;top:291.5px" width="4" height="3" viewBox="0 0 4 3"><path d="M0.3 0.5 L2 2.5 L3.7 0.5" fill="none" stroke="#c8c8c8" stroke-width="0.6"/></svg>
<svg style="left:130.5px;top:288.5px" width="6" height="8" viewBox="0 0 6 8"><path d="M3 7.5 L3 1 M0.7 3.3 L3 1 L5.3 3.3" fill="none" stroke="#333" stroke-width="0.9"/></svg>
<div class="a" style="left:141.5px;top:286.5px;width:186.5px;height:12px;border:1px solid #d9d9d9;background:#fff"></div>
<svg style="left:144px;top:288.5px" width="7" height="8" viewBox="0 0 7 8"><path d="M0.5 1 L2.5 0.5 L2.5 7.5 L0.5 8Z" fill="#d9b24a"/><path d="M2.5 1.5 L6.5 1.5 L6.5 7.5 L2.5 7.5Z" fill="#f6d98a"/></svg>
<svg style="left:156.5px;top:290.5px" width="3" height="4" viewBox="0 0 3 4"><path d="M0.3 0 L2.5 2 L0.3 4Z" fill="#555"/></svg>
<div class="t ex" style="left:164px;top:290.3px">Videos</div>
<svg style="left:320px;top:291px" width="5" height="3" viewBox="0 0 5 3"><path d="M0.4 0.4 L2.5 2.5 L4.6 0.4" fill="none" stroke="#333" stroke-width="0.8"/></svg>
<div class="a" style="left:328px;top:286.5px;width:14px;height:12px;border:1px solid #d9d9d9;border-left:none;background:#fff"></div>
<svg style="left:331.5px;top:289px" width="7" height="7" viewBox="0 0 7 7"><path d="M5.8 3.5 A2.4 2.4 0 1 1 4.5 1.3" fill="none" stroke="#444" stroke-width="0.8"/><path d="M3.6 0.2 L5.6 1.2 L4 2.6Z" fill="#444"/></svg>
<div class="a" style="left:348.5px;top:286.5px;width:116px;height:12px;border:1px solid #d9d9d9;background:#fff"></div>
<div class="t" style="left:353px;top:290.3px;font-size:6.9px;color:#6d6d6d">Search Videos</div>
<svg style="left:453.5px;top:288.5px" width="7" height="7" viewBox="0 0 7 7"><circle cx="4.2" cy="2.8" r="2" fill="none" stroke="#333" stroke-width="0.8"/><path d="M2.8 4.2 L0.6 6.4" stroke="#333" stroke-width="1"/></svg>

<!-- nav pane -->
<div class="a" style="left:80px;top:309.5px;width:81px;height:11px;background:#f5f5f5;border-top:1px solid #e8e8e8;border-bottom:1px solid #e8e8e8"></div>
<svg style="left:89.5px;top:311px" width="9" height="9" viewBox="0 0 9 9"><path d="M4.5 0.3 L5.8 3.1 L8.7 3.3 L6.4 5.2 L7.2 8.5 L4.5 6.7 L1.8 8.5 L2.6 5.2 L0.3 3.3 L3.2 3.1Z" fill="#f4b400" stroke="#d08000" stroke-width="0.4"/></svg>
<div class="t ex" style="left:102px;top:312px">Favorites</div>
<svg style="left:96px;top:323px" width="9" height="8" viewBox="0 0 9 8"><rect x="0.3" y="0.5" width="8.4" height="6.5" fill="#2b6fc0" stroke="#1d4f90" stroke-width="0.5"/><rect x="1" y="1.2" width="7" height="4.5" fill="#4a90dd"/></svg>
<div class="t ex" style="left:109px;top:324.7px">Desktop</div>
<svg style="left:96.5px;top:334.5px" width="9" height="9" viewBox="0 0 9 9"><path d="M0.5 1 L2.5 0.5 L2.5 8.5 L0.5 9Z" fill="#d9b24a"/><path d="M2.5 1.5 L7 1.5 L7 8.5 L2.5 8.5Z" fill="#f6d98a"/><path d="M6 4 L6 7.5 M4.3 6 L6 7.8 L7.7 6" fill="none" stroke="#1e78c8" stroke-width="1.1"/></svg>
<div class="t ex" style="left:109px;top:336.7px">Downloads</div>
<svg style="left:96px;top:346.5px" width="9" height="9" viewBox="0 0 9 9"><rect x="0.5" y="0.5" width="7" height="7.5" fill="#f2f2f2" stroke="#8a9aaa" stroke-width="0.6"/><path d="M2 3 L6 3 M2 5 L5 5" stroke="#6a8aaa" stroke-width="0.6"/><circle cx="6.5" cy="6.5" r="2" fill="#fff" stroke="#777" stroke-width="0.5"/></svg>
<div class="t ex" style="left:109px;top:348.5px">Recent places</div>
<svg style="left:89.5px;top:370.5px" width="10" height="9" viewBox="0 0 10 9"><rect x="2" y="0.5" width="7.5" height="6" fill="#2b6fc0" stroke="#333" stroke-width="0.5"/><rect x="0.3" y="3" width="3" height="5.5" fill="#ddd" stroke="#666" stroke-width="0.5"/><path d="M4 8.5 L8 8.5" stroke="#555" stroke-width="0.8"/></svg>
<div class="t ex" style="left:103px;top:372.7px">This PC</div>
<svg style="left:96.5px;top:383px" width="9" height="9" viewBox="0 0 9 9"><path d="M0.5 1 L2.5 0.5 L2.5 8.5 L0.5 9Z" fill="#d9b24a"/><path d="M2.5 1.5 L7 1.5 L7 8.5 L2.5 8.5Z" fill="#f6d98a"/><rect x="4.5" y="4.5" width="4" height="3.5" fill="#2b6fc0"/></svg>
<div class="t ex" style="left:109px;top:384.5px">Desktop</div>
<svg style="left:96.5px;top:395px" width="9" height="9" viewBox="0 0 9 9"><path d="M0.5 1 L2.5 0.5 L2.5 8.5 L0.5 9Z" fill="#d9b24a"/><path d="M2.5 1.5 L7 1.5 L7 8.5 L2.5 8.5Z" fill="#f6d98a"/><rect x="4" y="3" width="4" height="5" fill="#f8f8f8" stroke="#999" stroke-width="0.4"/></svg>
<div class="t ex" style="left:109px;top:396.5px">Documents</div>
<svg style="left:96.5px;top:407px" width="9" height="9" viewBox="0 0 9 9"><path d="M0.5 1 L2.5 0.5 L2.5 8.5 L0.5 9Z" fill="#d9b24a"/><path d="M2.5 1.5 L7 1.5 L7 8.5 L2.5 8.5Z" fill="#f6d98a"/><path d="M6 4 L6 7.5 M4.3 6 L6 7.8 L7.7 6" fill="none" stroke="#1e78c8" stroke-width="1.1"/></svg>
<div class="t ex" style="left:109px;top:409.3px">Downloads</div>
<svg style="left:97.5px;top:419px" width="6" height="10" viewBox="0 0 6 10"><rect x="0.5" y="0.5" width="5" height="9" fill="#e8e8e8" stroke="#666" stroke-width="0.6"/><rect x="1.3" y="1.5" width="3.4" height="6" fill="#aaa"/></svg>
<div class="t ex" style="left:109px;top:421.3px">Muhammad.Waqas</div>
<svg style="left:96.5px;top:431px" width="9" height="9" viewBox="0 0 9 9"><path d="M0.5 1 L2.5 0.5 L2.5 8.5 L0.5 9Z" fill="#d9b24a"/><path d="M2.5 1.5 L7 1.5 L7 8.5 L2.5 8.5Z" fill="#f6d98a"/><path d="M5.5 3 L5.5 7 M5.5 3 L7.5 4" fill="none" stroke="#1e78c8" stroke-width="0.9"/><circle cx="4.8" cy="7" r="1" fill="#1e78c8"/></svg>
<div class="t ex" style="left:109px;top:433.3px">Music</div>
<svg style="left:96.5px;top:443.5px" width="9" height="9" viewBox="0 0 9 9"><path d="M0.5 1 L2.5 0.5 L2.5 8.5 L0.5 9Z" fill="#d9b24a"/><path d="M2.5 1.5 L7 1.5 L7 8.5 L2.5 8.5Z" fill="#f6d98a"/><rect x="4" y="3.5" width="4.5" height="4" fill="#bfe0f0" stroke="#4a9ad0" stroke-width="0.5"/></svg>
<div class="t ex" style="left:109px;top:445.8px">Pictures</div>
<div class="a" style="left:79px;top:455px;width:82px;height:4px;overflow:hidden"><div class="t ex" style="left:30px;top:1.5px">Videos</div><svg style="left:17.5px;top:0.5px" width="9" height="9" viewBox="0 0 9 9"><path d="M0.5 1 L2.5 0.5 L2.5 8.5 L0.5 9Z" fill="#d9b24a"/><path d="M2.5 1.5 L7 1.5 L7 8.5 L2.5 8.5Z" fill="#f6d98a"/></svg></div>
<!-- nav scrollbar -->
<div class="a" style="left:161px;top:304px;width:10px;height:155px;background:#e8e8e8"></div>
<div class="a" style="left:161px;top:304px;width:10px;height:10px;background:#f0f0f0"></div>
<svg style="left:163.5px;top:307.5px" width="5" height="3" viewBox="0 0 5 3"><path d="M0.4 2.6 L2.5 0.5 L4.6 2.6" fill="none" stroke="#444" stroke-width="0.9"/></svg>
<div class="a" style="left:162px;top:314px;width:8px;height:88px;background:#cdcdcd"></div>
<div class="a" style="left:161px;top:449px;width:10px;height:10px;background:#f0f0f0"></div>
<svg style="left:163.5px;top:453.5px" width="5" height="3" viewBox="0 0 5 3"><path d="M0.4 0.4 L2.5 2.5 L4.6 0.4" fill="none" stroke="#444" stroke-width="0.9"/></svg>

<!-- content header -->
<div class="t" style="left:182px;top:308px;font-size:6.9px;color:#4c607a">Name</div>
<svg style="left:251.5px;top:303.5px" width="5" height="3" viewBox="0 0 5 3"><path d="M0.4 2.6 L2.5 0.5 L4.6 2.6" fill="none" stroke="#777" stroke-width="0.8"/></svg>
<div class="a" style="left:328.5px;top:304px;width:0.8px;height:14px;background:#e5e5e5"></div>
<div class="t" style="left:333px;top:308px;font-size:6.9px;color:#4c607a">Date modified</div>
<div class="a" style="left:397.5px;top:304px;width:0.8px;height:14px;background:#e5e5e5"></div>
<div class="t" style="left:402px;top:308px;font-size:6.9px;color:#4c607a">Type</div>
<div class="a" style="left:467px;top:304px;width:0.8px;height:14px;background:#e5e5e5"></div>
<!-- file row -->
<div class="a" style="left:180px;top:320.5px;width:291.5px;height:12.5px;background:#cce8ff;border:1px solid #99d1ff"></div>
<svg style="left:183px;top:322px" width="8" height="10" viewBox="0 0 8 10"><path d="M0.5 0.5 L5 0.5 L7.5 3 L7.5 9.5 L0.5 9.5Z" fill="#f4f4f4" stroke="#777" stroke-width="0.6"/><rect x="1.5" y="3" width="4.5" height="4.5" fill="#555"/><rect x="2.5" y="4" width="2.5" height="2.5" fill="#ccc"/></svg>
<div class="t ex" style="left:194.5px;top:324px;color:#0a0a0a;font-size:6.95px">Microsoft Silverlight DEMO.mp4</div>
<div class="t" style="left:333px;top:324px;font-size:6.9px;color:#6d6d6d">11/20/2015 9:58 AM</div>
<div class="t" style="left:402px;top:324px;font-size:6.9px;color:#6d6d6d">MP4 Video File</div>
<!-- content h scrollbar -->
<div class="a" style="left:172px;top:450px;width:299.5px;height:9px;background:#e8e8e8"></div>
<svg style="left:175.5px;top:452.5px" width="3" height="5" viewBox="0 0 3 5"><path d="M2.6 0.4 L0.5 2.5 L2.6 4.6" fill="none" stroke="#333" stroke-width="0.9"/></svg>
<div class="a" style="left:182px;top:451px;width:242px;height:7px;background:#cdcdcd"></div>
<svg style="left:466px;top:452.5px" width="3" height="5" viewBox="0 0 3 5"><path d="M0.4 0.4 L2.5 2.5 L0.4 4.6" fill="none" stroke="#333" stroke-width="0.9"/></svg>
<!-- status bar -->
<div class="t" style="left:87px;top:463.5px;font-size:6.9px;color:#333">1 item</div>
<div class="t" style="left:118px;top:463.5px;font-size:6.9px;color:#333">1 item selected</div>
<div class="t" style="left:167px;top:463.5px;font-size:6.9px;color:#333">24.7 MB</div>
<div class="a" style="left:444px;top:459.5px;width:13px;height:13px;background:#cce8ff;border:1px solid #99d1ff"></div>
<svg style="left:446px;top:461.5px" width="9" height="9" viewBox="0 0 9 9"><path d="M0.5 1 L2.5 1 M3.5 1 L8.5 1 M0.5 4.5 L2.5 4.5 M3.5 4.5 L8.5 4.5 M0.5 8 L2.5 8 M3.5 8 L8.5 8" stroke="#333" stroke-width="1"/></svg>
<div class="a" style="left:458.5px;top:462px;width:9.5px;height:8.5px;background:#e8f0f8;border:1px solid #aac"></div>
<div class="a" style="left:460px;top:465px;width:6px;height:3.5px;background:#345"></div>

</div></body></html>
